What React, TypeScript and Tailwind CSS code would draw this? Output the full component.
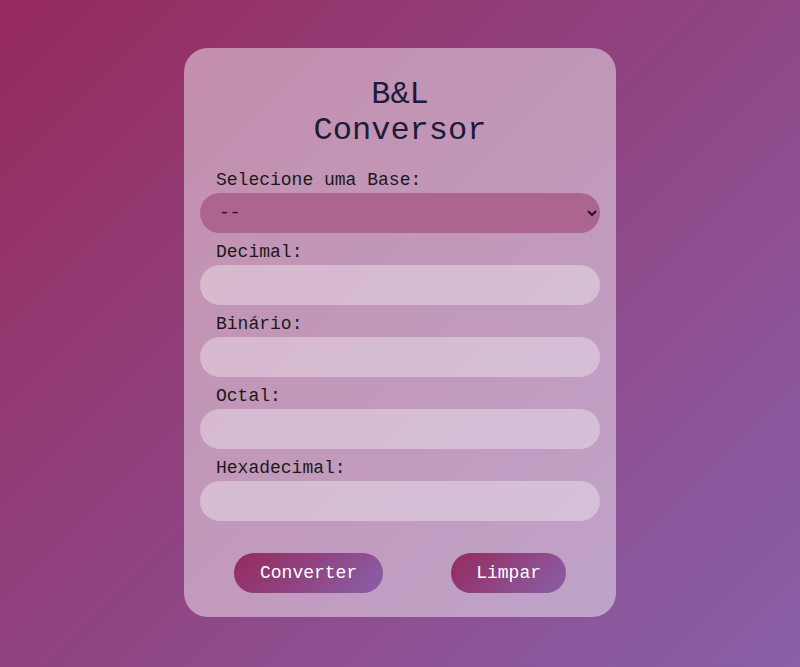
import { useState } from "react"

const fields = ["Decimal", "Binário", "Octal", "Hexadecimal"]

export default function App() {
  const [base, setBase] = useState("--")
  const [values, setValues] = useState<Record<string, string>>({})

  const limpar = () => {
    setBase("--")
    setValues({})
  }

  return (
    <div className="flex min-h-[667px] w-full items-start justify-center bg-[linear-gradient(135deg,#962a5d,#8960a9)] pt-[48px] font-['Liberation_Mono','Courier_New',monospace]">
      <div className="flex w-[432px] flex-col rounded-[24px] bg-white/45 px-4 pb-6 pt-[29px]">
        <h1 className="text-center text-[32px] leading-[36px] text-[#1c1c3a]">
          B&amp;L
          <br />
          Conversor
        </h1>

        <label className="block pl-4 pt-[21px] pb-[3px] text-[18px] leading-[20px] text-[#1a1a1a]">Selecione uma Base:</label>
        <select
          value={base}
          onChange={(e) => setBase(e.target.value)}
          className="h-10 w-full rounded-full bg-[#ab6590] pl-[15px] pr-2 text-[18px] text-[#1a1a1a] outline-none"
        >
          <option value="--">--</option>
          <option value="dec">Decimal</option>
          <option value="bin">Binário</option>
          <option value="oct">Octal</option>
          <option value="hex">Hexadecimal</option>
        </select>

        {fields.map((f) => (
          <div key={f}>
            <label className="block pl-4 pt-[9px] pb-[3px] text-[18px] leading-[20px] text-[#1a1a1a]">{f}:</label>
            <input
              value={values[f] ?? ""}
              onChange={(e) => setValues({ ...values, [f]: e.target.value })}
              className="h-10 w-full rounded-full bg-white/35 px-5 text-[18px] outline-none"
            />
          </div>
        ))}

        <div className="mt-8 flex justify-around">
          <button className="h-10 rounded-full bg-[linear-gradient(135deg,#962a5d,#8960a9)] px-[26px] text-[18px] text-white">
            Converter
          </button>
          <button
            onClick={limpar}
            className="h-10 rounded-full bg-[linear-gradient(135deg,#962a5d,#8960a9)] px-[25px] text-[18px] text-white"
          >
            Limpar
          </button>
        </div>
      </div>
    </div>
  )
}
